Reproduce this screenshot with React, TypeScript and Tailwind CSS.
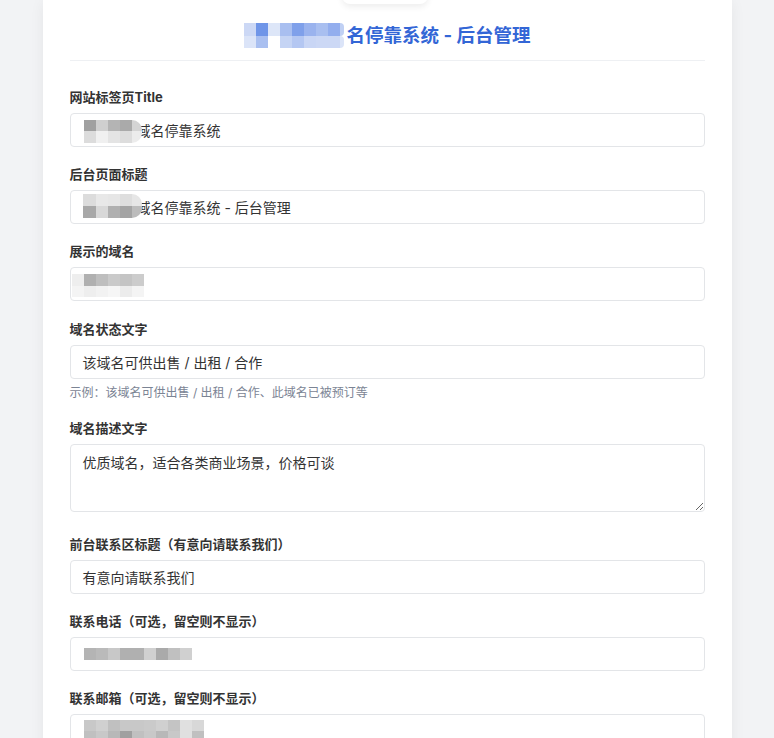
import React from "react";

type Row = { h: string; cells: { w: string; c: string }[] };

function Mosaic({ rows, className = "" }: { rows: Row[]; className?: string }) {
  return (
    <div className={"relative z-10 flex flex-col shrink-0 " + className}>
      {rows.map((r, i) => (
        <div key={i} className={"flex " + r.h}>
          {r.cells.map((cell, j) => (
            <div key={j} className={"h-full " + cell.w + " " + cell.c} />
          ))}
        </div>
      ))}
    </div>
  );
}

const titleMosaic: Row[] = [
  {
    h: "h-[13px]",
    cells: [
      { w: "w-[12px]", c: "bg-[#ccd8f5]" },
      { w: "w-[12px]", c: "bg-[#6f95e8]" },
      { w: "w-[12px]", c: "bg-[#dde6f8]" },
      { w: "w-[12px]", c: "bg-[#a9bff0]" },
      { w: "w-[12px]", c: "bg-[#7fa0ea]" },
      { w: "w-[12px]", c: "bg-[#9ab3ee]" },
      { w: "w-[12px]", c: "bg-[#a9bff0]" },
      { w: "w-[12px]", c: "bg-[#93aeee]" },
      { w: "w-[4px]", c: "bg-[#c0d0f4] rounded-r-full" },
    ],
  },
  {
    h: "h-[12px]",
    cells: [
      { w: "w-[12px]", c: "bg-[#dbe4f8]" },
      { w: "w-[12px]", c: "bg-[#a9bff0]" },
      { w: "w-[12px]", c: "bg-white" },
      { w: "w-[12px]", c: "bg-[#c5d4f4]" },
      { w: "w-[12px]", c: "bg-[#b4c7f2]" },
      { w: "w-[12px]", c: "bg-[#c9d6f5]" },
      { w: "w-[12px]", c: "bg-[#ccd8f5]" },
      { w: "w-[12px]", c: "bg-[#ccd8f5]" },
      { w: "w-[4px]", c: "bg-[#dbe4f8] rounded-r-full" },
    ],
  },
];

const m1: Row[] = [
  {
    h: "h-[11px]",
    cells: [
      { w: "w-[12px]", c: "bg-[#a0a0a0]" },
      { w: "w-[12px]", c: "bg-[#cfcfcf]" },
      { w: "w-[12px]", c: "bg-[#b4b4b4]" },
      { w: "w-[12px]", c: "bg-[#aaaaaa]" },
      { w: "w-[10px]", c: "bg-[#d4d4d4] rounded-tr-full" },
    ],
  },
  {
    h: "h-[12px]",
    cells: [
      { w: "w-[12px]", c: "bg-[#dcdcdc]" },
      { w: "w-[12px]", c: "bg-[#f0f0f0]" },
      { w: "w-[12px]", c: "bg-[#e4e4e4]" },
      { w: "w-[12px]", c: "bg-[#dddddd]" },
      { w: "w-[10px]", c: "bg-[#ececec] rounded-br-full" },
    ],
  },
];

const m2: Row[] = [
  {
    h: "h-[12px]",
    cells: [
      { w: "w-[13px]", c: "bg-[#dcdcdc]" },
      { w: "w-[12px]", c: "bg-[#e8e8e8]" },
      { w: "w-[12px]", c: "bg-[#e6e6e6]" },
      { w: "w-[12px]", c: "bg-[#dedede]" },
      { w: "w-[10px]", c: "bg-[#e6e6e6] rounded-tr-full" },
    ],
  },
  {
    h: "h-[12px]",
    cells: [
      { w: "w-[13px]", c: "bg-[#a8a8a8]" },
      { w: "w-[12px]", c: "bg-[#d8d8d8]" },
      { w: "w-[12px]", c: "bg-[#b0b0b0]" },
      { w: "w-[12px]", c: "bg-[#a4a4a4]" },
      { w: "w-[10px]", c: "bg-[#bcbcbc] rounded-br-full" },
    ],
  },
];

const m3: Row[] = [
  {
    h: "h-[12px]",
    cells: [
      { w: "w-[12px]", c: "bg-[#eeeeee]" },
      { w: "w-[12px]", c: "bg-[#b0b0b0]" },
      { w: "w-[12px]", c: "bg-[#bebebe]" },
      { w: "w-[12px]", c: "bg-[#cacaca]" },
      { w: "w-[12px]", c: "bg-[#c4c4c4]" },
      { w: "w-[12px]", c: "bg-[#cccccc]" },
    ],
  },
  {
    h: "h-[11px]",
    cells: [
      { w: "w-[12px]", c: "bg-[#f4f4f4]" },
      { w: "w-[12px]", c: "bg-[#eeeeee]" },
      { w: "w-[12px]", c: "bg-[#f2f2f2]" },
      { w: "w-[12px]", c: "bg-[#f6f6f6]" },
      { w: "w-[12px]", c: "bg-[#ececec]" },
      { w: "w-[12px]", c: "bg-[#f4f4f4]" },
    ],
  },
];

const mPhone: Row[] = [
  {
    h: "h-[12px]",
    cells: [
      { w: "w-[12px]", c: "bg-[#b4b4b4]" },
      { w: "w-[12px]", c: "bg-[#bababa]" },
      { w: "w-[12px]", c: "bg-[#c8c8c8]" },
      { w: "w-[12px]", c: "bg-[#b0b0b0]" },
      { w: "w-[12px]", c: "bg-[#b0b0b0]" },
      { w: "w-[12px]", c: "bg-[#d0d0d0]" },
      { w: "w-[12px]", c: "bg-[#aaaaaa]" },
      { w: "w-[12px]", c: "bg-[#c0c0c0]" },
      { w: "w-[12px]", c: "bg-[#d0d0d0]" },
    ],
  },
];

const mEmail: Row[] = [
  {
    h: "h-[11px]",
    cells: [
      { w: "w-[12px]", c: "bg-[#c8c8c8]" },
      { w: "w-[12px]", c: "bg-[#d0d0d0]" },
      { w: "w-[12px]", c: "bg-[#c0c0c0]" },
      { w: "w-[12px]", c: "bg-[#c8c8c8]" },
      { w: "w-[12px]", c: "bg-[#c8c8c8]" },
      { w: "w-[12px]", c: "bg-[#cacaca]" },
      { w: "w-[12px]", c: "bg-[#d0d0d0]" },
      { w: "w-[12px]", c: "bg-[#c4c4c4]" },
      { w: "w-[12px]", c: "bg-[#e0e0e0]" },
      { w: "w-[12px]", c: "bg-[#d8d8d8]" },
    ],
  },
  {
    h: "h-[12px]",
    cells: [
      { w: "w-[12px]", c: "bg-[#c0c0c0]" },
      { w: "w-[12px]", c: "bg-[#c8c8c8]" },
      { w: "w-[12px]", c: "bg-[#b8b8b8]" },
      { w: "w-[12px]", c: "bg-[#a0a0a0]" },
      { w: "w-[12px]", c: "bg-[#c0c0c0]" },
      { w: "w-[12px]", c: "bg-[#c8c8c8]" },
      { w: "w-[12px]", c: "bg-[#b8b8b8]" },
      { w: "w-[12px]", c: "bg-[#c8c8c8]" },
      { w: "w-[12px]", c: "bg-[#e0e0e0]" },
      { w: "w-[12px]", c: "bg-[#c0c0c0]" },
    ],
  },
];

function Label({ children }: { children: React.ReactNode }) {
  return (
    <div className="h-[20px] leading-[20px] text-[13px] font-bold text-[#333] mb-[6px] whitespace-nowrap">
      {children}
    </div>
  );
}

function Box({ children }: { children?: React.ReactNode }) {
  return (
    <div className="h-[34px] flex items-center px-[12px] border border-[#e3e5e8] rounded-[4px] bg-white text-[14px] text-[#333] whitespace-nowrap overflow-hidden">
      {children}
    </div>
  );
}

export default function App() {
  const font = {
    fontFamily: '"Inter", "Noto Sans CJK SC", "Noto Sans", sans-serif',
  };
  return (
    <div
      className="min-h-[738px] w-full bg-[#f2f3f5] relative overflow-hidden"
      style={font}
    >
      <div className="absolute top-[-22px] left-[342px] w-[86px] h-[26px] bg-white rounded-[8px] shadow-[0_3px_6px_rgba(0,0,0,0.07)] z-20" />
      <div className="mx-auto w-[689px] bg-white shadow-[0_2px_14px_rgba(0,0,0,0.06)] px-[27px] pt-[22px] pb-[40px] min-h-[760px]">
        <div className="flex items-center justify-center pb-[12px] border-b border-[#eef0f3] mb-[26px]">
          <Mosaic rows={titleMosaic} className="mr-[3px]" />
          <div className="h-[26px] leading-[26px] text-[18.5px] font-bold text-[#3366d6]">
            名停靠系统 - 后台管理
          </div>
        </div>

        <div className="mb-[17px]">
          <Label>网站标签页Title</Label>
          <Box>
            <Mosaic rows={m1} className="ml-[1px] mt-[3px]" />
            <span className="ml-[-5px]">域名停靠系统</span>
          </Box>
        </div>

        <div className="mb-[17px]">
          <Label>后台页面标题</Label>
          <Box>
            <Mosaic rows={m2} className="mt-[-3px]" />
            <span className="ml-[-5px]">域名停靠系统 - 后台管理</span>
          </Box>
        </div>

        <div className="mb-[18px]">
          <Label>展示的域名</Label>
          <Box>
            <Mosaic rows={m3} className="ml-[-11px] mt-[3px]" />
          </Box>
        </div>

        <div className="mb-[17px]">
          <Label>域名状态文字</Label>
          <Box>该域名可供出售 / 出租 / 合作</Box>
          <div className="mt-[6px] h-[16px] leading-[16px] text-[12px] text-[#7b8494]">
            示例：该域名可供出售 / 出租 / 合作、此域名已被预订等
          </div>
        </div>

        <div className="mb-[22px]">
          <Label>域名描述文字</Label>
          <textarea
            readOnly
            defaultValue="优质域名，适合各类商业场景，价格可谈"
            className="block w-full h-[68px] px-[12px] py-[8px] leading-[20px] border border-[#e3e5e8] rounded-[4px] text-[14px] text-[#333] resize-y outline-none"
            style={font}
          />
        </div>

        <div className="mb-[17px]">
          <Label>前台联系区标题（有意向请联系我们）</Label>
          <Box>有意向请联系我们</Box>
        </div>

        <div className="mb-[17px]">
          <Label>联系电话（可选，留空则不显示）</Label>
          <Box>
            <Mosaic rows={mPhone} className="ml-[1px]" />
          </Box>
        </div>

        <div className="mb-[17px]">
          <Label>联系邮箱（可选，留空则不显示）</Label>
          <Box>
            <Mosaic rows={mEmail} className="ml-[1px] mt-[1px]" />
          </Box>
        </div>
      </div>
      <div className="absolute left-0 right-0 bottom-0 h-[22px] bg-linear-to-b from-transparent to-black/[0.04] pointer-events-none" />
    </div>
  );
}
